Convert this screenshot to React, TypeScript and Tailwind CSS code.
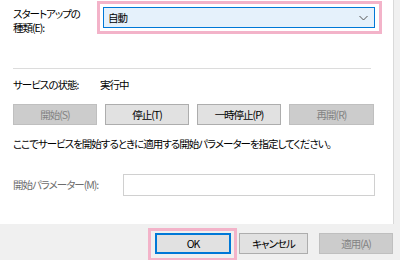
import React from "react";

const Btn = ({ label, disabled, w = "w-[84px]" }: { label: string; disabled?: boolean; w?: string }) => (
  <div
    className={`${w} h-[21px] flex items-center justify-center border ${
      disabled ? "bg-[#cccccc] border-[#bfbfbf] text-[#838383]" : "bg-[#e1e1e1] border-[#adadad] text-black"
    }`}
  >
    {label}
  </div>
);

export default function App() {
  return (
    <div className="w-[400px] h-[260px] bg-[#f0f0f0] overflow-hidden font-['Noto_Sans_CJK_JP','Noto_Sans',sans-serif] text-[10.5px] leading-[14px] text-black [font-feature-settings:'palt'] tracking-[-1px]">
      <div className="flex h-[224px]">
        <div className="w-[394px] h-full bg-white border-r border-[#d9d9d9] pl-[13px] flex flex-col">
          {/* startup type */}
          <div className="flex mt-[1px]">
            <div className="w-[84px] pt-[6px] flex flex-col">
              <span>スタートアップの</span>
              <span>種類(E):</span>
            </div>
            <div className="w-[285px] h-[33px] border-[3px] border-[#f3b3c9] p-[3px] pr-[4px]">
              <div className="h-full bg-[#e5f1fb] border border-[#0078d7] flex items-center justify-between pl-[4px] pr-[6px]">
                <span>自動</span>
                <svg width="9" height="6" viewBox="0 0 9 6" className="mt-[1px]">
                  <path d="M0.5 1 L4.5 5 L8.5 1" fill="none" stroke="#555" strokeWidth="1" />
                </svg>
              </div>
            </div>
          </div>
          {/* separator */}
          <div className="w-[358px] h-[1px] bg-[#dcdcdc] mt-[33px]" />
          {/* status */}
          <div className="flex mt-[9px] h-[14px] items-center">
            <span className="w-[87px]">サービスの状態:</span>
            <span>実行中</span>
          </div>
          {/* buttons */}
          <div className="flex gap-[8px] mt-[12px]">
            <Btn label="開始(S)" disabled />
            <Btn label="停止(T)" />
            <Btn label="一時停止(P)" />
            <Btn label="再開(R)" disabled w="w-[85px]" />
          </div>
          <div className="mt-[12px]">ここでサービスを開始するときに適用する開始パラメーターを指定してください。</div>
          <div className="flex items-center mt-[23px]">
            <span className="w-[110px] text-[#6d6d6d]">開始パラメーター(M):</span>
            <div className="w-[252px] h-[22px] border border-[#d0d0d0] bg-white" />
          </div>
        </div>
      </div>
      <div className="flex items-start pt-[4px] pl-[148px]">
        <div className="w-[89px] h-[33px] border-[3px] border-[#f3b3c9] p-[2px] pl-[4px] pr-[3px]">
          <div className="w-[76px] h-[21px] bg-[#e1e1e1] border-2 border-[#0078d7] flex items-center justify-center">OK</div>
        </div>
        <div className="ml-[2px] mt-[5px]">
          <Btn label="キャンセル" w="w-[69px]" />
        </div>
        <div className="ml-[11px] mt-[5px]">
          <Btn label="適用(A)" disabled w="w-[74px]" />
        </div>
      </div>
    </div>
  );
}
